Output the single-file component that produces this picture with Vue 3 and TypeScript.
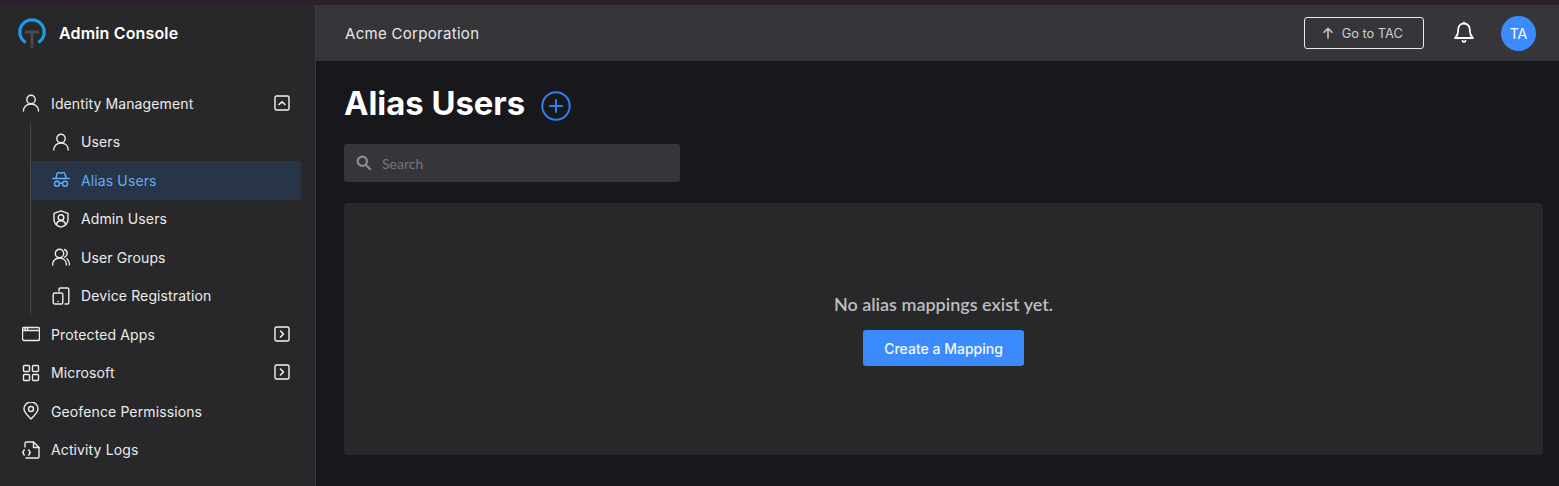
<script setup lang="ts">
const subItems: { label: string; icon: string; active?: boolean }[] = [
  { label: 'Users', icon: 'user' },
  { label: 'Alias Users', icon: 'alias', active: true },
  { label: 'Admin Users', icon: 'admin' },
  { label: 'User Groups', icon: 'group' },
  { label: 'Device Registration', icon: 'device' },
]
const lowerItems: { label: string; icon: string; chevron?: boolean }[] = [
  { label: 'Protected Apps', icon: 'apps', chevron: true },
  { label: 'Microsoft', icon: 'grid', chevron: true },
  { label: 'Geofence Permissions', icon: 'pin' },
  { label: 'Activity Logs', icon: 'log' },
]
</script>

<template>
  <div class="page">
    <div class="strip"></div>
    <div class="shell">
      <aside class="sidebar">
        <div class="brand">
          <svg class="logo" width="30" height="32" viewBox="0 0 30 32" fill="none">
            <path d="M7.700 23.800A12.200 12.200 0 1 1 22.300 23.800" stroke="#1f9de0" stroke-width="3.200" stroke-linecap="round" />
            <path d="M9 14H21M15 14V29" stroke="#4a4a4e" stroke-width="3" stroke-linecap="round" />
          </svg>
          <span class="brand-name">Admin Console</span>
        </div>
        <nav class="nav">
          <div class="item">
            <svg class="icon" viewBox="0 0 18 18" fill="none" stroke="currentColor" stroke-width="1.400" stroke-linecap="round" stroke-linejoin="round"><circle cx="9" cy="5.500" r="4.200" /><path d="M1.500 17c0-4.200 3-7 7.500-7s7.500 2.800 7.500 7" /></svg>
            <span>Identity Management</span>
            <svg class="chev" viewBox="0 0 16 16" fill="none" stroke="currentColor" stroke-width="1.400" stroke-linecap="round" stroke-linejoin="round"><rect x="1" y="1" width="14" height="14" rx="1.500" /><path d="M5 9.500 8 6.800l3 2.700" stroke-width="1.600" /></svg>
          </div>
          <div class="sub">
            <div v-for="s in subItems" :key="s.label" class="sub-item" :class="{ active: s.active }">
              <svg class="icon" viewBox="0 0 18 18" fill="none" stroke="currentColor" stroke-width="1.400" stroke-linecap="round" stroke-linejoin="round">
                <template v-if="s.icon === 'user'"><circle cx="9" cy="5.500" r="4.200" /><path d="M1.800 17c0-4.200 2.900-7 7.200-7s7.200 2.800 7.200 7" /></template>
                <template v-else-if="s.icon === 'alias'"><path d="M4 7 5.200 2.500C5.400 1.700 6 1.400 6.800 1.600L9 2.200l2.200-.6c.8-.2 1.400.1 1.600.9L14 7" /><path d="M.8 7.500h16.400" /><circle cx="5" cy="12.800" r="2.500" /><circle cx="13" cy="12.800" r="2.500" /><path d="M7.500 12.500c1-.6 2-.6 3 0" /></template>
                <template v-else-if="s.icon === 'admin'"><path d="M9 .8l7 2.500v6.200c0 3.700-3 6.500-7 7.700-4-1.200-7-4-7-7.700V3.300z" /><circle cx="9" cy="7.500" r="2.800" /><path d="M4.500 14.200c.5-2.300 2.300-3.500 4.500-3.500s4 1.200 4.500 3.500" /></template>
                <template v-else-if="s.icon === 'group'"><circle cx="7.500" cy="5.500" r="4.200" /><path d="M.6 17c0-4.200 2.700-7 6.900-7s6.900 2.800 6.900 7" /><path d="M12.500 1.500a4.200 4.200 0 0 1 0 7.800M15 10.800c1.500 1.300 2.400 3.400 2.400 6" /></template>
                <template v-else-if="s.icon === 'device'"><path d="M7 4V2.300C7 1.500 7.500 1 8.300 1h7.200c.8 0 1.300.5 1.300 1.300v13.400c0 .8-.5 1.300-1.300 1.300H13" /><rect x="1.200" y="6" width="9.600" height="11" rx="1.500" /><path d="M6 14.500h.01" stroke-width="1.600" /></template>
              </svg>
              <span>{{ s.label }}</span>
            </div>
          </div>
          <div v-for="l in lowerItems" :key="l.label" class="item">
            <svg class="icon" viewBox="0 0 18 18" fill="none" stroke="currentColor" stroke-width="1.400" stroke-linecap="round" stroke-linejoin="round">
              <template v-if="l.icon === 'apps'"><rect x="0.500" y="2.500" width="17" height="13" rx="1.500" /><path d="M.5 5.500h17M3 2.500v3M5.500 2.500v3" /></template>
              <template v-else-if="l.icon === 'grid'"><rect x="1.500" y="1.500" width="6" height="6" rx="1" /><rect x="10.500" y="1.500" width="6" height="6" rx="1" /><rect x="1.500" y="10.500" width="6" height="6" rx="1" /><rect x="10.500" y="10.500" width="6" height="6" rx="1" /></template>
              <template v-else-if="l.icon === 'pin'"><path d="M9 17c-3.600-3.500-7-6.800-7-10a7 7 0 0 1 14 0c0 3.200-3.400 6.500-7 10z" /><circle cx="9" cy="7" r="2.500" /></template>
              <template v-else><path d="M3 6V2.300C3 1.600 3.500 1 4.200 1h7.300L17 6.500v9.300c0 .7-.5 1.200-1.200 1.200H4" /><path d="M11.500 1v5.500H17" /><path d="M2.500 9c-.8 0-1 .4-1 1v.8c0 .5-.3.7-1 .7.7 0 1 .2 1 .7v.8c0 .6.200 1 1 1M6.500 9c.8 0 1 .4 1 1v.8c0 .5.300.7 1 .7-.7 0-1 .2-1 .7v.8c0 .6-.2 1-1 1" /></template>
            </svg>
            <span>{{ l.label }}</span>
            <svg v-if="l.chevron" class="chev" viewBox="0 0 16 16" fill="none" stroke="currentColor" stroke-width="1.400" stroke-linecap="round" stroke-linejoin="round"><rect x="1" y="1" width="14" height="14" rx="1.500" /><path d="M6.500 5l3 3-3 3" stroke-width="1.600" /></svg>
          </div>
        </nav>
      </aside>

      <div class="content">
        <header class="topbar">
          <span class="org">Acme Corporation</span>
          <div class="top-actions">
            <button class="tac">
              <svg width="12" height="12" viewBox="0 0 12 12" fill="none" stroke="#c4c4c7" stroke-width="1.600" stroke-linecap="round" stroke-linejoin="round"><path d="M6 11V1.500M2 5.300 6 1.300l4 4" /></svg>
              <span>Go to TAC</span>
            </button>
            <svg class="bell" width="22" height="24" viewBox="0 0 22 24" fill="none" stroke="#fff" stroke-width="1.800" stroke-linecap="round" stroke-linejoin="round"><path d="M11 1.500v1M11 2.500c-3.700 0-5.800 2.800-5.800 6.200 0 4.500-1.200 6.300-3.200 8.300h18c-2-2-3.200-3.800-3.200-8.300 0-3.400-2.100-6.200-5.800-6.200z" /><path d="M9.500 20a1.700 1.700 0 0 0 3 0" /></svg>
            <div class="avatar">TA</div>
          </div>
        </header>
        <main class="main">
          <div class="title-row">
            <h1>Alias Users</h1>
            <svg width="30" height="30" viewBox="0 0 30 30" fill="none" stroke="#2f80ed" stroke-width="2" stroke-linecap="round"><circle cx="15" cy="15" r="13.700" /><path d="M15 9v12M9 15h12" /></svg>
          </div>
          <div class="search">
            <svg width="16" height="16" viewBox="0 0 16 16" fill="none" stroke="#8c8c8f" stroke-width="2.200" stroke-linecap="round"><circle cx="6.300" cy="6.300" r="4.600" /><path d="M9.900 9.900 14 14" /></svg>
            <span>Search</span>
          </div>
          <section class="panel">
            <p>No alias mappings exist yet.</p>
            <button class="create">Create a Mapping</button>
          </section>
        </main>
      </div>
    </div>
  </div>
</template>

<style>
html, body { margin: 0; background: #18181c; overflow: hidden; }
</style>

<style scoped>
.page { width: 1559px; height: 486px; display: flex; flex-direction: column; font-family: Inter, "Liberation Sans", sans-serif; background: #18181c; overflow: hidden; }
.strip { height: 5px; background: #2b202c; flex: none; }
.shell { flex: 1; display: flex; min-height: 0; }
.sidebar { width: 315px; flex: none; background: #28282a; border-right: 1px solid #3a3a3e; color: #ececee; }
.brand { height: 56px; display: flex; align-items: center; padding-left: 17px; gap: 12px; }
.logo { margin-top: 1px; }
.brand-name { color: #fff; font-size: 16px; font-weight: 600; letter-spacing: 0.15px; }
.nav { margin-top: 23px; font-size: 14px; letter-spacing: 0.12px; }
.item { height: 38.500px; display: flex; align-items: center; padding-left: 22px; position: relative; }
.item > span { margin-left: 11px; }
.icon { width: 18px; height: 18px; flex: none; }
.chev { width: 16px; height: 16px; position: absolute; left: 274px; top: 10.500px; color: #f2f2f2; }
.sub { margin-left: 30px; border-left: 1px solid #48484c; width: 270px; }
.sub-item { height: 38.500px; display: flex; align-items: center; padding-left: 21px; border-radius: 3px; }
.sub-item > span { margin-left: 11px; }
.sub-item.active { background: #283447; color: #62aef2; }
.content { flex: 1; display: flex; flex-direction: column; min-width: 0; }
.topbar { height: 56px; flex: none; background: #35353a; display: flex; align-items: center; justify-content: space-between; padding: 0 23px 0 29px; }
.org { color: #e8e8ea; font-size: 15px; letter-spacing: 0.3px; }
.top-actions { display: flex; align-items: center; }
.tac { width: 120px; height: 32px; box-sizing: border-box; background: transparent; border: 1px solid #e8e8e8; border-radius: 3px; color: #cfcfd2; font: 12.800px Inter, "Liberation Sans", sans-serif; display: flex; align-items: center; justify-content: center; gap: 7.500px; padding: 0 3px 0 0; }
.bell { margin-left: 29px; margin-top: -1px; }
.avatar { width: 35px; height: 35px; margin-left: 26px; border-radius: 50%; background: #3b8bff; color: #fff; font-size: 14px; display: flex; align-items: center; justify-content: center; }
.main { flex: 1; padding: 0 16px 0 28px; }
.title-row { display: flex; align-items: center; gap: 16px; height: 83px; }
.title-row h1 { margin: 0; color: #fff; font-size: 32.800px; font-weight: 700; letter-spacing: 0; }
.title-row svg { margin-top: 7px; }
.search { width: 336px; height: 38px; background: #35353a; border-radius: 3px; display: flex; align-items: center; padding-left: 12px; box-sizing: border-box; color: #77777b; font: 14px Lato, "Liberation Sans", sans-serif; gap: 10px; }
.panel { margin-top: 21px; height: 252px; background: #28282a; border-radius: 4px; display: flex; flex-direction: column; align-items: center; }
.panel p { margin: 90px 0 0; color: #bdbdbf; font: 600 18px Lato, "Liberation Sans", sans-serif; line-height: 22px; }
.create { margin-top: 15px; width: 161px; height: 36px; border: 0; border-radius: 3px; background: #3b8bff; color: #f4f8ff; font: 500 14px Inter, "Liberation Sans", sans-serif; padding: 0; }
</style>
